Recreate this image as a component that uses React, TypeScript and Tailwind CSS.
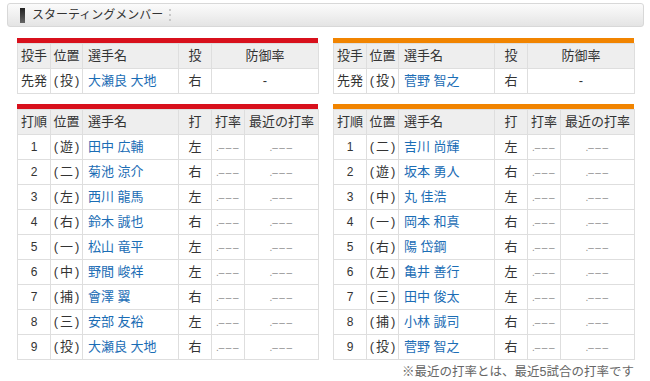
import React from "react";

const FONT = { fontFamily: '"Liberation Sans", "Noto Sans CJK JP", sans-serif' };

type Batter = { o: string; pos: string; name: string; hand: string };

const homeP = { pos: "投", name: "大瀬良 大地", hand: "右" };
const awayP = { pos: "投", name: "菅野 智之", hand: "右" };

const home: Batter[] = [
  { o: "1", pos: "遊", name: "田中 広輔", hand: "左" },
  { o: "2", pos: "二", name: "菊池 涼介", hand: "右" },
  { o: "3", pos: "左", name: "西川 龍馬", hand: "左" },
  { o: "4", pos: "右", name: "鈴木 誠也", hand: "右" },
  { o: "5", pos: "一", name: "松山 竜平", hand: "左" },
  { o: "6", pos: "中", name: "野間 峻祥", hand: "左" },
  { o: "7", pos: "捕", name: "會澤 翼", hand: "右" },
  { o: "8", pos: "三", name: "安部 友裕", hand: "左" },
  { o: "9", pos: "投", name: "大瀬良 大地", hand: "右" },
];

const away: Batter[] = [
  { o: "1", pos: "二", name: "吉川 尚輝", hand: "左" },
  { o: "2", pos: "遊", name: "坂本 勇人", hand: "右" },
  { o: "3", pos: "中", name: "丸 佳浩", hand: "左" },
  { o: "4", pos: "一", name: "岡本 和真", hand: "右" },
  { o: "5", pos: "右", name: "陽 岱鋼", hand: "右" },
  { o: "6", pos: "左", name: "亀井 善行", hand: "左" },
  { o: "7", pos: "三", name: "田中 俊太", hand: "左" },
  { o: "8", pos: "捕", name: "小林 誠司", hand: "右" },
  { o: "9", pos: "投", name: "菅野 智之", hand: "右" },
];

const cell = "border border-[#dedede] p-0 align-middle";

function Pos({ p }: { p: string }) {
  return (
    <span className="whitespace-nowrap">
      (<span className="mx-[2px]">{p}</span>)
    </span>
  );
}

function Name({ n }: { n: string }) {
  return <span className="text-[#1b6db5] whitespace-nowrap">{n}</span>;
}

function Dash() {
  return (
    <span className="text-[#8f8f8f] whitespace-nowrap">
      <span className="text-[10px]">.</span>
      <span className="text-[10px] tracking-[1.5px]">–––</span>
    </span>
  );
}

function PitcherTable({ color, p }: { color: string; p: { pos: string; name: string; hand: string } }) {
  return (
    <div className="w-[301px]">
      <div className={`h-[5px] ${color}`} />
      <table className="w-[301px] table-fixed border-collapse text-[13px] text-[#333333]">
        <colgroup>
          <col className="w-[33px]" />
          <col className="w-[32px]" />
          <col className="w-[96px]" />
          <col className="w-[33px]" />
          <col className="w-[107px]" />
        </colgroup>
        <tbody>
          <tr className="h-[25px] bg-[#eeeeee]">
            <td className={`${cell} text-center`}>投手</td>
            <td className={`${cell} text-center`}>位置</td>
            <td className={`${cell} pl-[5px]`}>選手名</td>
            <td className={`${cell} text-center`}>投</td>
            <td className={`${cell} text-center`}>防御率</td>
          </tr>
          <tr className="h-[25px] bg-white">
            <td className={`${cell} text-center`}>先発</td>
            <td className={`${cell} text-center`}><Pos p={p.pos} /></td>
            <td className={`${cell} pl-[5px]`}><Name n={p.name} /></td>
            <td className={`${cell} text-center`}>{p.hand}</td>
            <td className={`${cell} text-center`}>-</td>
          </tr>
        </tbody>
      </table>
    </div>
  );
}

function BatTable({ color, rows }: { color: string; rows: Batter[] }) {
  return (
    <div className="w-[301px]">
      <div className={`h-[5px] ${color}`} />
      <table className="w-[301px] table-fixed border-collapse text-[13px] text-[#333333]">
        <colgroup>
          <col className="w-[33px]" />
          <col className="w-[32px]" />
          <col className="w-[96px]" />
          <col className="w-[33px]" />
          <col className="w-[33px]" />
          <col className="w-[74px]" />
        </colgroup>
        <tbody>
          <tr className="h-[25px] bg-[#eeeeee]">
            <td className={`${cell} text-center`}>打順</td>
            <td className={`${cell} text-center`}>位置</td>
            <td className={`${cell} pl-[5px]`}>選手名</td>
            <td className={`${cell} text-center`}>打</td>
            <td className={`${cell} text-center`}>打率</td>
            <td className={`${cell} text-center whitespace-nowrap`}>最近の打率</td>
          </tr>
          {rows.map((r) => (
            <tr key={r.o} className="h-[25px] bg-white">
              <td className={`${cell} text-center text-[12px]`}>{r.o}</td>
              <td className={`${cell} text-center`}><Pos p={r.pos} /></td>
              <td className={`${cell} pl-[5px]`}><Name n={r.name} /></td>
              <td className={`${cell} text-center`}>{r.hand}</td>
              <td className={`${cell} text-center`}><Dash /></td>
              <td className={`${cell} text-center`}><Dash /></td>
            </tr>
          ))}
        </tbody>
      </table>
    </div>
  );
}

export default function App() {
  return (
    <div className="w-[650px] h-[381px] bg-white overflow-hidden px-[7px] pt-[3px]" style={FONT}>
      <div className="w-[637px] h-[24px] rounded-[3px] border border-[#d8d8d8] bg-gradient-to-b from-[#fbfbfb] via-[#f0f0f0] to-[#e4e4e4] flex items-center pl-[12px]">
        <div className="w-[5px] h-[15px] bg-gradient-to-b from-[#222222] to-[#666666]" />
        <span className="ml-[7px] text-[12px] text-[#333333] leading-none">スターティングメンバー</span>
        <div className="ml-[6px] flex flex-col gap-[3px]">
          <div className="w-[2px] h-[2px] bg-[#c8c8c8]" />
          <div className="w-[2px] h-[2px] bg-[#c8c8c8]" />
          <div className="w-[2px] h-[2px] bg-[#c8c8c8]" />
        </div>
      </div>
      <div className="pl-[10px] mt-[11px]">
        <div className="flex gap-[15px]">
          <PitcherTable color="bg-[#d8101c]" p={homeP} />
          <PitcherTable color="bg-[#f18400]" p={awayP} />
        </div>
        <div className="flex gap-[15px] mt-[10px]">
          <BatTable color="bg-[#d8101c]" rows={home} />
          <BatTable color="bg-[#f18400]" rows={away} />
        </div>
        <div className="w-[617px] text-right text-[12.5px] text-[#666666] mt-[3px] leading-[18px]">
          ※最近の打率とは、最近5試合の打率です
        </div>
      </div>
    </div>
  );
}
